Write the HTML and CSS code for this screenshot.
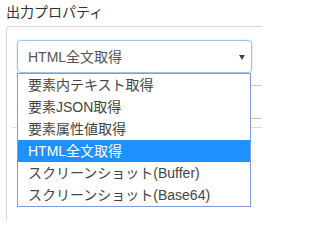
FILE: index.html
```html
<!DOCTYPE html>
<html lang="ja">
<head>
<meta charset="utf-8">
<link rel="stylesheet" href="styles.css">
</head>
<body>
<h3 class="title">出力プロパティ</h3>
<div class="panel">
  <div class="panel-body">
    <div class="dropdown">
      <div class="select">
        <span class="select-value">HTML全文取得</span>
        <span class="caret"></span>
      </div>
      <ul class="options">
        <li class="option">要素内テキスト取得</li>
        <li class="option">要素JSON取得</li>
        <li class="option">要素属性値取得</li>
        <li class="option selected">HTML全文取得</li>
        <li class="option">スクリーンショット(Buffer)</li>
        <li class="option">スクリーンショット(Base64)</li>
      </ul>
    </div>
    <div class="field"></div>
    <div class="divider"></div>
  </div>
</div>
</body>
</html>
```
FILE: styles.css
```css
html, body {
  margin: 0;
  padding: 0;
  overflow: hidden;
  background: #fff;
}
body {
  width: 262px;
  height: 221px;
  font-family: "Liberation Sans", "Noto Sans CJK JP", sans-serif;
  font-size: 14px;
  color: #333;
}
.title {
  margin: 0;
  padding: 2px 0 0 6px;
  font-size: 14px;
  font-weight: normal;
  line-height: 20px;
  height: 22px;
  box-sizing: border-box;
  margin-bottom: 4px;
}
.panel {
  margin-left: 6px;
  width: 255px;
  height: 194px;
  border: 1px solid #d6d6d6;
  border-right: none;
  border-bottom: none;
  border-radius: 4px 0 0 0;
}
.panel-body {
  padding: 13px 0 0 10px;
}
.dropdown {
  position: relative;
  width: 235px;
}
.select {
  box-sizing: border-box;
  height: 33px;
  width: 235px;
  border: 1px solid #9fc1ea;
  border-radius: 4px;
  box-shadow: 0 0 2px rgba(102, 175, 233, 0.5);
  display: flex;
  align-items: center;
  justify-content: space-between;
  padding: 0 6px 0 10px;
  color: #555;
  line-height: 20px;
}
.caret {
  width: 0;
  height: 0;
  border-left: 3px solid transparent;
  border-right: 3px solid transparent;
  border-top: 5px solid #444;
  margin-top: 1px;
}
.options {
  position: absolute;
  top: 100%;
  left: 0;
  z-index: 5;
  margin: 0;
  padding: 0;
  list-style: none;
  box-sizing: border-box;
  width: 234px;
  border: 1px solid #7d9dd8;
  background: #fff;
}
.option {
  height: 22px;
  line-height: 22px;
  padding-left: 10px;
  color: #444;
  white-space: nowrap;
}
.option.selected {
  background: #1e90ff;
  color: #fff;
}
.field {
  margin-top: 12px;
  height: 34px;
  box-sizing: border-box;
  border-top: 1px solid #cfcfcf;
  border-bottom: 1px solid #bdbdbd;
  margin-left: 4px;
}
.divider {
  margin-top: 8px;
  margin-left: -5px;
  border-top: 1px solid #dcdcdc;
}
```
